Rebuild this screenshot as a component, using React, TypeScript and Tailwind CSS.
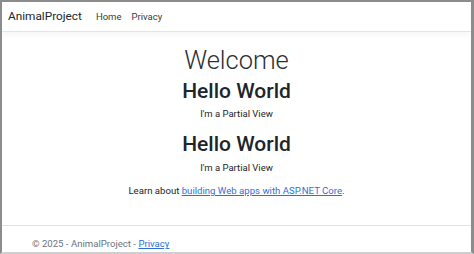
export default function App() {
  return (
    <div
      className="w-[474px] h-[254px] flex flex-col overflow-hidden bg-white border-t-2 border-l-2 border-r-[3px] border-b-2 border-t-[#8c8c8c] border-l-[#8c8c8c] border-r-[#8c8c8c] border-b-[#cfcfcf] text-[#212529]"
      style={{ fontFamily: 'Roboto, "Open Sans", sans-serif' }}
    >
      {/* Navbar */}
      <header className="h-[30px] shrink-0 flex items-center px-[6px] border-b border-[#e6e6e6] shadow-[0_3px_6px_rgba(0,0,0,0.04)]">
        <span className="text-[11.8px] mr-[14px] leading-none">AnimalProject</span>
        <nav className="flex items-center gap-[10px] text-[9.5px] text-[#3a3a3a] leading-none">
          <span>Home</span>
          <span>Privacy</span>
        </nav>
      </header>

      {/* Main */}
      <main className="flex-1 flex flex-col items-center text-center pt-[11px]">
        <h1 className="text-[25.5px] font-light leading-[34px] text-[#2b2f33]">Welcome</h1>
        <h2 className="text-[21px] font-medium leading-[26px] mt-[1px]">Hello World</h2>
        <p className="text-[9.5px] leading-[14px] mt-[3px]">I'm a Partial View</p>
        <h2 className="text-[21px] font-medium leading-[26px] mt-[10px]">Hello World</h2>
        <p className="text-[9.5px] leading-[14px] mt-[4px]">I'm a Partial View</p>
        <p className="text-[9.6px] leading-[14px] mt-[9px]">
          Learn about{" "}
          <a className="text-[#2f6fd9] underline" href="#">
            building Web apps with ASP.NET Core
          </a>
          .
        </p>
      </main>

      {/* Footer */}
      <footer className="h-[27px] shrink-0 border-t border-[#e3e3e3] flex items-end pb-[3px] pl-[30px] text-[9.6px] text-[#6c757d] leading-none">
        <span>
          © 2025 - AnimalProject -{" "}
          <a className="text-[#2f6fd9] underline" href="#">
            Privacy
          </a>
        </span>
      </footer>
    </div>
  );
}
